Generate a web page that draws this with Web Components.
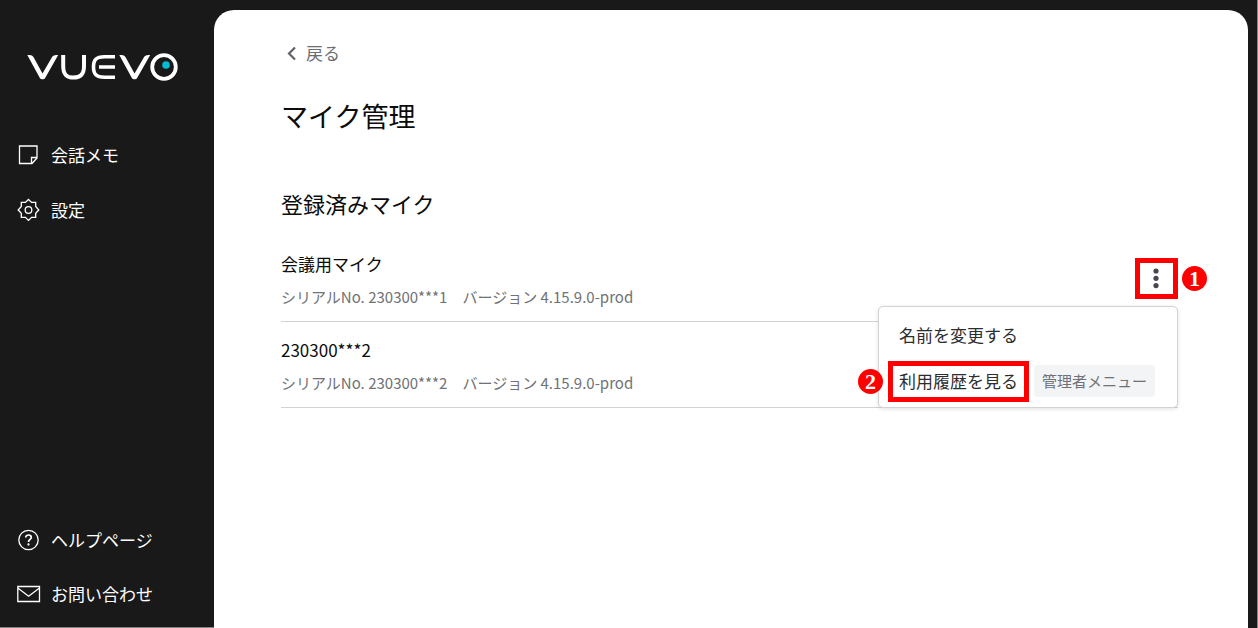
<!DOCTYPE html>
<html lang="ja">
<head>
<meta charset="utf-8">
<meta name="viewport" content="width=device-width, initial-scale=1">
<title>マイク管理 - VUEVO</title>
<style>
  html, body { margin: 0; }
  body {
    font-family: "Noto Sans CJK JP", sans-serif;
    font-size: 17px;
    line-height: 24px;
    color: #0c0c0c;
    background: #191919;
  }
</style>
</head>
<body>
<vuevo-app>
  <side-bar slot="side">
    <nav-item icon="memo">会話メモ</nav-item>
    <nav-item icon="gear">設定</nav-item>
    <nav-item slot="foot" icon="help">ヘルプページ</nav-item>
    <nav-item slot="foot" icon="mail">お問い合わせ</nav-item>
  </side-bar>
  <mic-page heading="マイク管理" section="登録済みマイク">
    <mic-row name="会議用マイク" serial="230300***1" version="4.15.9.0-prod">
      <more-button slot="action" step="1"></more-button>
      <mic-menu slot="menu"></mic-menu>
    </mic-row>
    <mic-row name="230300***2" serial="230300***2" version="4.15.9.0-prod"></mic-row>
  </mic-page>
</vuevo-app>

<script>
const define = (tag, render) => customElements.define(tag, class extends HTMLElement {
  constructor() {
    super();
    this.attachShadow({ mode: 'open' });
  }
  connectedCallback() {
    const t = document.createElement('template');
    t.innerHTML = render(this);
    this.shadowRoot.replaceChildren(t.content.cloneNode(true));
  }
});

const icons = {
  memo: '<path d="M2.500 3H20V15L15 20.500H2.500ZM14.500 20V14.500H20"/>',
  gear: '<path d="M11.500 1.500 14.600 4.400H18.700V8.500L21.800 12 18.700 15.200V19.400H14.600L11.500 22.400 8.400 19.400H4.300V15.200L1.200 12 4.300 8.500V4.400H8.400Z"/><circle cx="11.500" cy="12" r="3.300"/>',
  help: '<circle cx="11.500" cy="12" r="9.700"/><path stroke-width="1.700" d="M8.700 9.600C8.700 7.800 10 7 11.500 7S14.300 7.900 14.300 9.400C14.300 11.300 11.500 11.500 11.500 14"/><circle cx="11.500" cy="16.500" r=".5"/>',
  mail: '<path d="M.8 4.500H22.500V19.500H.8ZM.8 6 11.600 14.300 22.500 6"/>'
};

define('vuevo-app', () => `
  <style>
    :host { display: grid; grid-template-columns: 214px minmax(0, 1fr); min-height: 100vh;
      box-sizing: border-box; background: #191919; border-right: 1px solid #858585; }
  </style>
  <slot name="side"></slot><slot></slot>`);

define('side-bar', () => `
  <style>
    :host { display: flex; flex-direction: column; box-sizing: border-box; color: #fff;
      padding: 50px 17px 21px; border-bottom: 1px solid #858585; }
    .logo { display: block; margin: 0 0 59px 10px; }
    nav { display: flex; flex-direction: column; gap: 31px; }
    nav.foot { margin-top: auto; gap: 30px; padding-top: 30px; }
    svg { display: block; }
  </style>
  <a class="logo" href="#" aria-label="VUEVO">
    <svg width="152" height="34" viewBox="0 0 152 34" fill="none" stroke="#fff" stroke-width="4">
      <path fill="#fff" stroke="none" d="M.3 5H2.500C4.500 5 5.500 5.700 6.600 7.300L15.500 23.500 24.500 8C25.800 5.800 27 5 29.200 5H31.200L18 28.200C17.200 29.500 14 29.500 13 28.200Z"/>
      <path d="M36.200 5V16C36.200 24.500 39.500 27.600 46.500 27.600S57 24.500 57 16V5"/>
      <path d="M88 6.800H77.500C69 6.800 66.500 10 66.500 17S69 27.200 77.500 27.200H88M72 17H88" stroke-width="3.600"/>
      <path fill="#fff" stroke="none" d="M92.300 5H94.500C96.500 5 97.500 5.700 98.600 7.300L107.500 23.500 116.500 8C117.800 5.800 119 5 121.200 5H123.200L110 28.200C109.200 29.500 106 29.500 105 28.200Z"/>
      <circle cx="137" cy="17" r="11.800" stroke-width="3.800"/>
      <circle cx="139" cy="15" r="3.800" fill="#00bcd4" stroke="none"/>
    </svg>
  </a>
  <nav><slot></slot></nav>
  <nav class="foot"><slot name="foot"></slot></nav>`);

define('nav-item', el => `
  <style>
    :host { display: block; }
    a { display: flex; align-items: center; gap: 10px; color: inherit; text-decoration: none; }
    svg { flex: none; overflow: visible; }
  </style>
  <a href="#"><svg width="24" height="24" viewBox="0 0 24 24" fill="none" stroke="#fff" stroke-width="1.300" aria-hidden="true">${icons[el.getAttribute('icon')]}</svg><slot></slot></a>`);

define('mic-page', el => `
  <style>
    :host { display: block; box-sizing: border-box; margin-top: 10px; margin-right: 9px;
      padding: 31px 70px 32px 67px; background: #fff; border-radius: 20px 20px 0 0; }
    .back { display: flex; align-items: center; gap: 8px; width: max-content; margin-left: 5px;
      color: #6b6e72; text-decoration: none; }
    h1, h2 { margin: 0; font-weight: 400; }
    h1 { margin-top: 31px; font-size: 27px; line-height: 40px; }
    h2 { margin: 50px 0 16px; font-size: 22px; line-height: 34px; }
  </style>
  <main>
    <a class="back" href="#"><svg width="12" height="16" viewBox="0 0 12 16" fill="none" stroke="#606367" stroke-width="2.200" aria-hidden="true"><path d="M9 2.500 3 8.500 9 14.500"/></svg>戻る</a>
    <h1>${el.getAttribute('heading')}</h1>
    <h2>${el.getAttribute('section')}</h2>
    <slot></slot>
  </main>`);

define('mic-row', el => `
  <style>
    :host { display: flex; align-items: center; justify-content: space-between; position: relative;
      border-bottom: 1px solid #d3d3d3; }
    .info { padding: 15px 0 12px; }
    h3 { margin: 0 0 8px; font-size: 17px; line-height: 26px; font-weight: 400; }
    p { margin: 0; font-size: 15px; line-height: 24px; color: #6f7276; }
    span { margin-left: 15px; }
  </style>
  <div class="info">
    <h3>${el.getAttribute('name')}</h3>
    <p>シリアルNo. ${el.getAttribute('serial')}<span>バージョン ${el.getAttribute('version')}</span></p>
  </div>
  <slot name="action"></slot><slot name="menu"></slot>`);

define('step-mark', () => `
  <style>
    :host { display: block; width: 25px; height: 25px; border-radius: 50%; background: #f00; color: #fff;
      font: bold 22px/25px "Liberation Serif", serif; text-align: center; }
  </style>
  <slot></slot>`);

define('more-button', el => `
  <style>
    :host { display: block; position: relative; }
    button { display: grid; place-items: center; width: 43px; height: 41px; box-sizing: border-box;
      padding: 0; border: 5px solid #f00; background: #fff; }
    step-mark { position: absolute; left: 47px; top: 8px; }
  </style>
  <button type="button" aria-label="メニュー" aria-expanded="true"><svg width="9" height="21" viewBox="0 0 9 21" fill="#46484d"><circle cx="4" cy="3" r="2.600"/><circle cx="4" cy="10.300" r="2.600"/><circle cx="4" cy="17.600" r="2.600"/></svg></button>
  <step-mark>${el.getAttribute('step')}</step-mark>`);

define('mic-menu', () => `
  <style>
    :host { display: block; position: absolute; z-index: 1; top: 70px; right: 0; width: 300px;
      box-sizing: border-box; padding: 8px 9px 5px; background: #fff; border: 1px solid #d3d3d3;
      border-radius: 5px; box-shadow: 0 1px 4px rgba(0, 0, 0, .12); }
    .item { display: flex; align-items: center; gap: 5px; position: relative; }
    .item + .item { margin-top: 5px; }
    button { height: 41px; padding: 0 6px 2px; border: 5px solid transparent; background: none;
      font: inherit; color: #2c2d30; box-sizing: border-box; white-space: nowrap; }
    .marked { border-color: #f00; }
    .tag { margin-bottom: 2px; padding: 4px 8px; border-radius: 4px; background: #f3f4f6;
      font-size: 15px; color: #6f7276; white-space: nowrap; }
    step-mark { position: absolute; left: -30px; top: 8px; }
  </style>
  <div class="item"><button type="button">名前を変更する</button></div>
  <div class="item"><step-mark>2</step-mark><button type="button" class="marked">利用履歴を見る</button><span class="tag">管理者メニュー</span></div>`);
</script>
</body>
</html>
